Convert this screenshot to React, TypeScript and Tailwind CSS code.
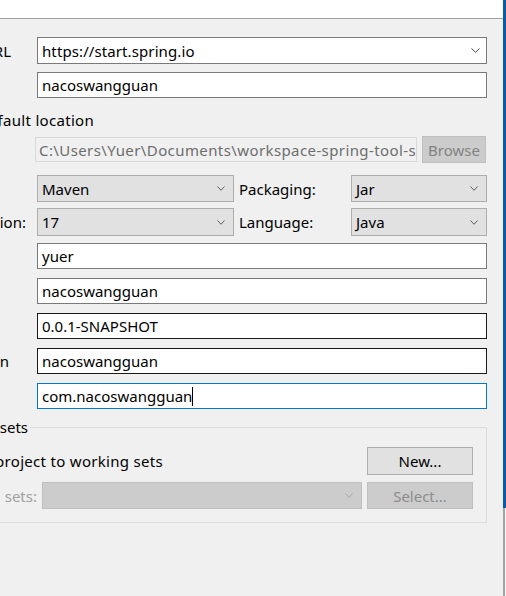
import React from "react";

// Clipped label cell: the dialog is cut off on the left, so the label text
// is anchored at its right end and overflows (hidden) to the left.
function Label({ text, className = "" }: { text: string; className?: string }) {
    return (
        <div
            className={`flex shrink-0 justify-end overflow-hidden whitespace-nowrap ${className}`}
        >
            <span>{text}</span>
        </div>
    );
}

function Chevron({ color = "#5f5f5f", w = 8 }: { color?: string; w?: number }) {
    return (
        <svg width={w} height="5" viewBox={`0 0 ${w} 5`} className="shrink-0">
            <path
                d={`M0.5 0.5 L${w / 2} 4.3 L${w - 0.5} 0.5`}
                fill="none"
                stroke={color}
                strokeWidth="1"
            />
        </svg>
    );
}

type ComboProps = {
    value: string;
    className?: string;
};

const Combo = ({ value, className = "" }: ComboProps) => {
    return (
        <div
            className={`flex items-center justify-between border border-[#adadad] bg-[#e1e1e1] pl-[4px] pr-[8px] ${className}`}
        >
            <span className="whitespace-nowrap">{value}</span>
            <Chevron />
        </div>
    );
};

type FieldProps = {
    value: string;
    border?: string;
    caret?: boolean;
};

const Field = ({ value, border = "border-[#7a7a7a]", caret }: FieldProps) => {
    return (
        <div
            className={`flex h-[26px] flex-1 items-center border bg-white pl-[4px] ${border}`}
        >
            <span className="whitespace-nowrap">{value}</span>
            {caret && <span className="h-[19px] w-px bg-black" />}
        </div>
    );
};

export default function App() {
    return (
        <div className="flex h-[596px] w-[506px] overflow-hidden bg-[#f0f0f0] font-['Noto_Sans',sans-serif] text-[15px] leading-[20px] text-black">
            <div className="flex w-[503px] shrink-0 flex-col">
                <div className="h-[19px] shrink-0 border-b border-[#a0a0a0] bg-white" />

                {/* Service URL */}
                <div className="mr-[16px] mt-[18px] flex h-[27px] items-center">
                    <Label text="Service URL" className="w-[37px] pr-[26px]" />
                    <div className="flex h-[27px] flex-1 items-center justify-between border border-[#7a7a7a] bg-white pl-[4px] pr-[6px]">
                        <span className="whitespace-nowrap tracking-[0.1px]">
                            https://start.spring.io
                        </span>
                        <Chevron w={9} color="#4a4a4a" />
                    </div>
                </div>

                {/* Name */}
                <div className="mr-[16px] mt-[8px] flex items-center">
                    <div className="w-[37px] shrink-0" />
                    <Field value="nacoswangguan" />
                </div>

                {/* Use default location */}
                <div className="mt-[10px] flex h-[24px] items-center">
                    <Label
                        text="Use default location"
                        className="w-[94px] tracking-[0.3px]"
                    />
                </div>

                {/* Location */}
                <div className="mr-[17px] mt-[4px] flex h-[27px] items-center">
                    <div className="w-[35px] shrink-0" />
                    <div className="flex h-[25px] min-w-0 flex-1 items-center overflow-hidden border border-[#d9d9d9] bg-[#f0f0f0] pl-[3px] text-[#6d6d6d]">
                        <span className="whitespace-nowrap tracking-[0.4px]">
                            C:\Users\Yuer\Documents\workspace-spring-tool-s
                        </span>
                    </div>
                    <button
                        type="button"
                        className="ml-[5px] h-[27px] w-[64px] shrink-0 border border-[#bfbfbf] bg-[#cccccc] text-[#838383]"
                    >
                        Browse
                    </button>
                </div>

                {/* Type / Packaging */}
                <div className="mr-[16px] mt-[12px] flex h-[27px] items-center">
                    <div className="w-[37px] shrink-0" />
                    <Combo value="Maven" className="h-[27px] w-[197px] shrink-0" />
                    <span className="ml-[5px] w-[112px] shrink-0">Packaging:</span>
                    <Combo value="Jar" className="h-[27px] flex-1" />
                </div>

                {/* Java Version / Language */}
                <div className="mr-[16px] mt-[6px] flex h-[28px] items-center">
                    <Label text="Java Version:" className="w-[37px] pr-[11px]" />
                    <Combo value="17" className="h-[28px] w-[197px] shrink-0" />
                    <span className="ml-[5px] w-[112px] shrink-0">Language:</span>
                    <Combo value="Java" className="h-[28px] flex-1" />
                </div>

                {/* Group */}
                <div className="mr-[16px] mt-[7px] flex items-center">
                    <div className="w-[37px] shrink-0" />
                    <Field value="yuer" />
                </div>

                {/* Artifact */}
                <div className="mr-[16px] mt-[9px] flex items-center">
                    <div className="w-[37px] shrink-0" />
                    <Field value="nacoswangguan" />
                </div>

                {/* Version */}
                <div className="mr-[16px] mt-[9px] flex items-center">
                    <div className="w-[37px] shrink-0" />
                    <Field value="0.0.1-SNAPSHOT" border="border-[#1a1a1a]" />
                </div>

                {/* Description */}
                <div className="mr-[16px] mt-[9px] flex items-center">
                    <Label text="Description" className="w-[37px] pr-[28px]" />
                    <Field value="nacoswangguan" border="border-[#1a1a1a]" />
                </div>

                {/* Package */}
                <div className="mr-[16px] mt-[9px] flex items-center">
                    <div className="w-[37px] shrink-0" />
                    <Field
                        value="com.nacoswangguan"
                        border="border-[#0078d7]"
                        caret
                    />
                </div>

                {/* Working sets group */}
                <div className="mr-[16px] mt-[18px] flex flex-col border-b border-r border-t border-[#dcdcdc] pb-[13px]">
                    <div className="-mt-[11px] flex h-[20px] items-center">
                        <Label
                            text="Working sets"
                            className="w-[30px] bg-[#f0f0f0] pr-[2px]"
                        />
                    </div>
                    <div className="mr-[13px] mt-[10px] flex h-[27px] items-center">
                        <Label
                            text="Add project to working sets"
                            className="w-[163px] tracking-[0.3px]"
                        />
                        <div className="flex-1" />
                        <button
                            type="button"
                            className="h-[28px] w-[106px] shrink-0 border border-[#adadad] bg-[#e1e1e1]"
                        >
                            New...
                        </button>
                    </div>
                    <div className="mr-[13px] mt-[8px] flex h-[27px] items-center">
                        <Label
                            text="Working sets:"
                            className="w-[37px] text-[#a0a0a0]"
                        />
                        <div className="ml-[5px] flex h-[27px] flex-1 items-center justify-end border border-[#bfbfbf] bg-[#cccccc] pr-[8px]">
                            <Chevron color="#a6a6a6" />
                        </div>
                        <button
                            type="button"
                            className="ml-[5px] h-[27px] w-[106px] shrink-0 border border-[#bfbfbf] bg-[#cccccc] text-[#8c8c8c]"
                        >
                            Select...
                        </button>
                    </div>
                </div>
            </div>

            {/* edge of the window behind */}
            <div className="flex w-[3px] shrink-0 flex-col">
                <div className="h-[508px] shrink-0 bg-[#0b5aa8]" />
                <div className="flex-1 border-l-2 border-[#a3a3a3] bg-[#f5f5f5]" />
            </div>
        </div>
    );
}
